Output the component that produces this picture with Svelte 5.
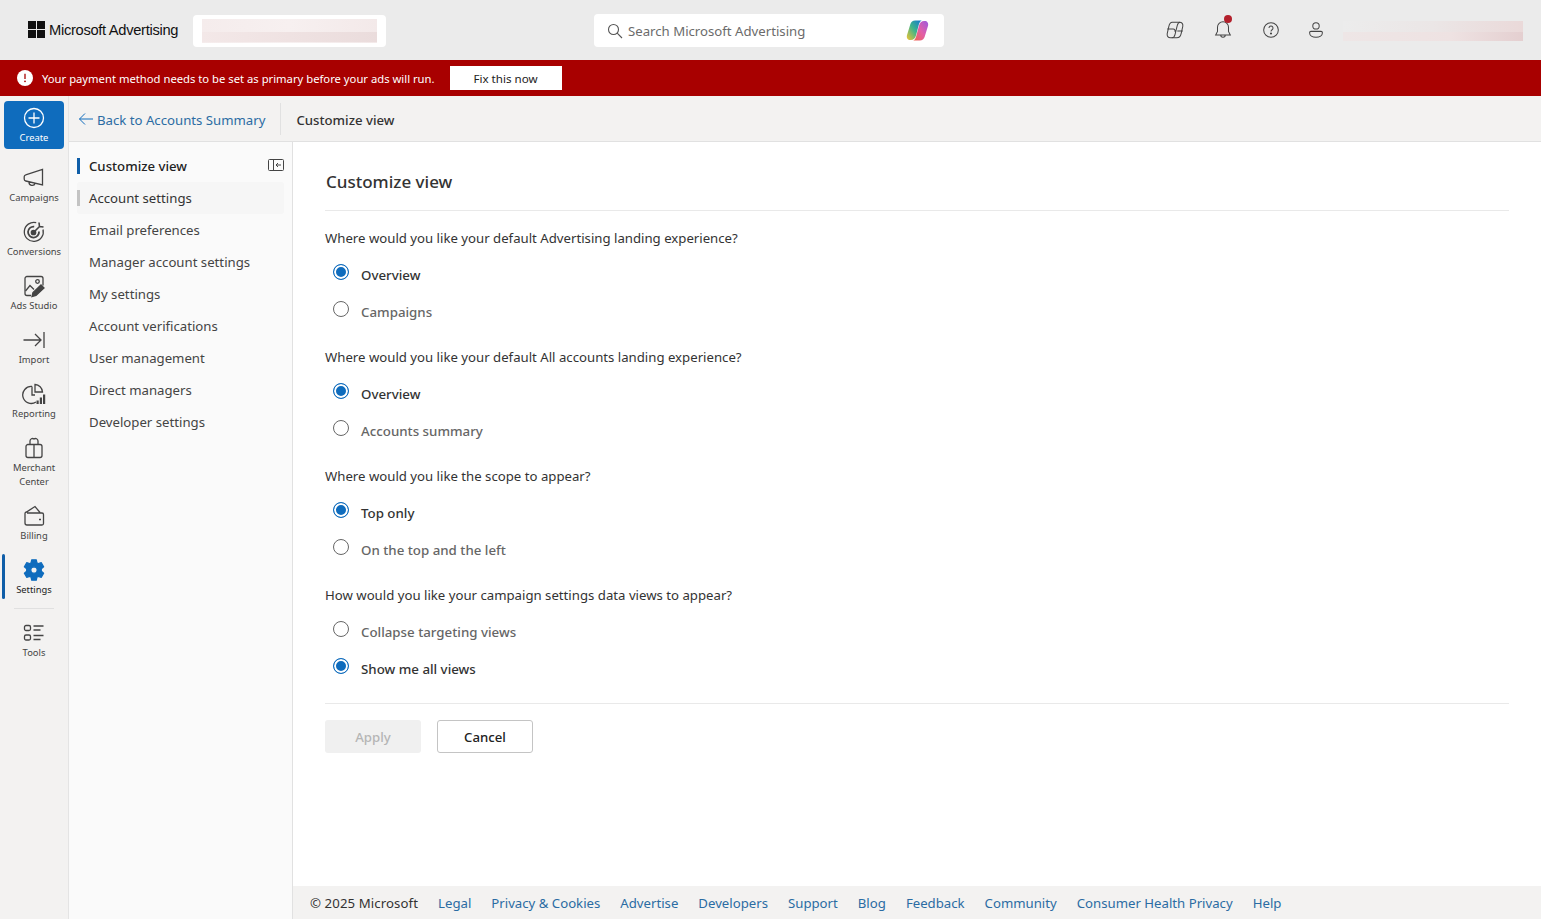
<script>
	const railItems = [
		{ label: 'Campaigns', icon: 'campaigns' },
		{ label: 'Conversions', icon: 'conversions' },
		{ label: 'Ads Studio', icon: 'ads' },
		{ label: 'Import', icon: 'import' },
		{ label: 'Reporting', icon: 'reporting' },
		{ label: 'Merchant Center', icon: 'merchant' },
		{ label: 'Billing', icon: 'billing' },
		{ label: 'Settings', icon: 'settings', active: true }
	];

	const icons = {
		campaigns: 'M20.5 3.500v15.500L3.800 15a2 2 0 0 1-1.600-2v-2.300a2 2 0 0 1 1.500-1.900zM7 16a3.200 3.200 0 0 0 6.200 1.300',
		import: 'M1.500 12h17.500M13 6l6 6-6 6M22 4v16',
		merchant: 'M6 8.500h12a2 2 0 0 1 2 2v9a2 2 0 0 1-2 2H6a2 2 0 0 1-2-2v-9a2 2 0 0 1 2-2zM12 8.500v13M8 8.500V5a2.500 2.500 0 0 1 4-2 2.500 2.500 0 0 1 4 2v3.500',
		billing: 'M5 9h15a1.500 1.500 0 0 1 1.500 1.500v9A1.500 1.500 0 0 1 20 21H5a2 2 0 0 1-2-2V9.500M3 9.500A1.500 1.500 0 0 1 4.500 8L13 2.500 18 8.500M17 15.500h2'
	};

	const subnav = [
		'Customize view',
		'Account settings',
		'Email preferences',
		'Manager account settings',
		'My settings',
		'Account verifications',
		'User management',
		'Direct managers',
		'Developer settings'
	];

	const questions = [
		{
			title: 'Where would you like your default Advertising landing experience?',
			options: ['Overview', 'Campaigns'],
			value: 'Overview'
		},
		{
			title: 'Where would you like your default All accounts landing experience?',
			options: ['Overview', 'Accounts summary'],
			value: 'Overview'
		},
		{
			title: 'Where would you like the scope to appear?',
			options: ['Top only', 'On the top and the left'],
			value: 'Top only'
		},
		{
			title: 'How would you like your campaign settings data views to appear?',
			options: ['Collapse targeting views', 'Show me all views'],
			value: 'Show me all views'
		}
	];

	const footerLinks = [
		'Legal',
		'Privacy & Cookies',
		'Advertise',
		'Developers',
		'Support',
		'Blog',
		'Feedback',
		'Community',
		'Consumer Health Privacy',
		'Help'
	];
</script>

<div class="page">
	<header class="topbar">
		<div class="brand">
			<svg class="ms-logo" viewBox="0 0 17 17" width="17" height="17">
				<rect width="8" height="8" fill="#111" />
				<rect x="9" width="8" height="8" fill="#111" />
				<rect y="9" width="8" height="8" fill="#111" />
				<rect x="9" y="9" width="8" height="8" fill="#111" />
			</svg>
			<span>Microsoft Advertising</span>
		</div>
		<div class="account-box"><div class="smudge"></div></div>

		<div class="search">
			<svg viewBox="0 0 16 16" width="16" height="16" fill="none" stroke="#555" stroke-width="1.100">
				<circle cx="6.500" cy="6.500" r="5" />
				<path d="M10.200 10.200 15 15" />
			</svg>
			<span class="placeholder">Search Microsoft Advertising</span>
			<svg class="copilot" viewBox="0 0 24 24" width="23" height="23">
				<defs>
					<linearGradient id="cpA" x1="0" y1="1" x2="1" y2="0">
						<stop offset="0" stop-color="#f4c430" />
						<stop offset="0.5" stop-color="#3fb58a" />
						<stop offset="1" stop-color="#1273d6" />
					</linearGradient>
					<linearGradient id="cpB" x1="0" y1="1" x2="1" y2="0">
						<stop offset="0" stop-color="#9a5be0" />
						<stop offset="0.5" stop-color="#e25fa8" />
						<stop offset="1" stop-color="#f0654a" />
					</linearGradient>
				</defs>
				<path d="M9.500 1.500h7c-1.500.6-2.400 2-3 4L10.500 17c-.7 3-2.700 5-5.500 5H4.500C1.800 22 .3 19.800 1 17L4.500 5.500C5.200 3 7 1.500 9.500 1.500z" fill="url(#cpA)" />
				<path d="M9.500 1.500h7c-1.500.6-2.400 2-3 4L10.500 17c-.7 3-2.700 5-5.500 5H4.500C1.800 22 .3 19.800 1 17L4.500 5.500C5.200 3 7 1.500 9.500 1.500z" fill="url(#cpB)" transform="rotate(180 12 12)" />
			</svg>
		</div>

		<div class="top-icons">
			<svg viewBox="0 0 24 24" width="22" height="22" fill="none" stroke="#444" stroke-width="1.100">
				<path d="M9 3.500h8c2.500 0 4 2 3.500 4.500l-1.800 8c-.6 2.800-2.300 4.500-4.700 4.500H7c-2.500 0-4-2-3.500-4.500l1.800-8C5.900 5.200 7 3.500 9 3.500z" />
				<path d="M8.500 20.500c2 0 3-1.400 3.500-3.500l2.500-10c.5-2 1.500-3.500 3-3.500M3.500 11h6.500c1.800 0 2.300 1.500 2 3M20.500 13H14.500" />
			</svg>
			<span class="bell">
				<svg viewBox="0 0 24 24" width="22" height="22" fill="none" stroke="#444" stroke-width="1.100">
					<path d="M12 3a6 6 0 0 0-6 6v4.500L4 17.500h16l-2-4V9a6 6 0 0 0-6-6zM9.500 17.500a2.500 2.500 0 0 0 5 0" />
				</svg>
				<i class="dot"></i>
			</span>
			<svg viewBox="0 0 24 24" width="22" height="22" fill="none" stroke="#444" stroke-width="1.100">
				<circle cx="12" cy="12" r="8" />
				<path d="M9.800 9.800a2.200 2.200 0 1 1 3.400 1.900c-.8.500-1.200 1-1.200 1.800" />
				<circle cx="12" cy="15.800" r=".6" fill="#444" />
			</svg>
			<svg class="person" viewBox="0 0 24 24" width="22" height="22" fill="none" stroke="#444" stroke-width="1.100">
				<circle cx="12" cy="7.500" r="3.500" />
				<path d="M6.500 13.500h11A1.500 1.500 0 0 1 19 15c0 3-3 5-7 5s-7-2-7-5a1.500 1.500 0 0 1 1.500-1.500z" />
			</svg>
		</div>
		<div class="user-smudge"></div>
	</header>

	<div class="banner">
		<svg viewBox="0 0 16 16" width="16" height="16">
			<circle cx="8" cy="8" r="8" fill="#fff" />
			<path d="M8 3.800v5.200" stroke="#a80000" stroke-width="1.300" />
			<circle cx="8" cy="11.300" r=".9" fill="#a80000" />
		</svg>
		<span class="banner-text">Your payment method needs to be set as primary before your ads will run.</span>
		<button class="fix">Fix this now</button>
	</div>

	<div class="body">
		<nav class="rail">
			<button class="create">
				<svg viewBox="0 0 22 22" width="22" height="22" fill="none" stroke="#fff" stroke-width="1.300">
					<circle cx="11" cy="11" r="9.500" />
					<path d="M11 5.500v11M5.500 11h11" />
				</svg>
				<span>Create</span>
			</button>

			{#each railItems as item}
				<div class="rail-item" class:active={item.active}>
					<svg class="rail-icon" viewBox="0 0 24 24" width="24" height="24" fill="none" stroke="#444" stroke-width="1.300">
						{#if item.icon === 'conversions'}
							<path d="M21 9.500a9.500 9.500 0 1 1-6.800-6.800" />
							<path d="M17 11.500a5.500 5.500 0 1 1-4.800-4.900" stroke-width="1.800" />
							<circle cx="11.500" cy="12.500" r="2.200" fill="#444" />
							<path d="M12 12l6-6M17 2.500l.5 4L21.500 7" stroke-width="1.600" />
						{:else if item.icon === 'ads'}
							<path d="M9 21.500H5a2 2 0 0 1-2-2V4.500a2 2 0 0 1 2-2h14a2 2 0 0 1 2 2v7" />
							<circle cx="15.500" cy="7.500" r="1.800" />
							<path d="M3.500 17l4.500-5.500 4 4" />
							<path d="M10 22.500l1-4 8-7.500 3 3-8 7.500z" fill="#444" />
						{:else if item.icon === 'reporting'}
							<path d="M10 4.500a8.500 8.500 0 1 0 4 15.500M10 4.500V13h3" />
							<path d="M13 2.500a8 8 0 0 1 7.500 7.500H13z" />
							<rect x="14.500" y="18.500" width="2.200" height="3.500" fill="#444" stroke="none" />
							<rect x="17.800" y="15.500" width="2.200" height="6.500" fill="#444" stroke="none" />
							<rect x="21" y="12.500" width="2.200" height="9.500" fill="#444" stroke="none" />
						{:else if item.icon === 'settings'}
							<path
								d="M9.700 1.800h4.600l.6 3 1.500.9 2.900-1 2.300 4-2.300 2v2.600l2.300 2-2.300 4-2.900-1-1.500.9-.6 3H9.700l-.6-3-1.500-.9-2.900 1-2.300-4 2.300-2v-2.600l-2.300-2 2.300-4 2.900 1 1.500-.9zM12 8.800a3.200 3.200 0 1 0 0 6.400 3.200 3.200 0 0 0 0-6.400z"
								fill="#0f6cbd"
								fill-rule="evenodd"
								stroke="#0f6cbd"
								stroke-linejoin="round"
							/>
						{:else}
							<path d={icons[item.icon]} />
						{/if}
					</svg>
					<span>{item.label}</span>
				</div>
			{/each}

			<div class="rail-divider"></div>

			<div class="rail-item tools">
				<svg class="rail-icon" viewBox="0 0 24 24" width="24" height="24" fill="none" stroke="#444" stroke-width="1.300">
					<rect x="2.500" y="4.500" width="6" height="5" rx="1.500" />
					<rect x="2.500" y="14" width="6" height="5" rx="1.500" />
					<path d="M11.500 5h10M11.500 9h7M11.500 14.500h10M11.500 18.500h7" />
				</svg>
				<span>Tools</span>
			</div>
		</nav>

		<div class="main">
			<div class="crumbs">
				<a class="back" href="#back">
					<svg viewBox="0 0 16 16" width="16" height="16" fill="none" stroke="#0f6cbd" stroke-width="1">
						<path d="M15 8H1.500M7 2.500 1.500 8 7 13.500" />
					</svg>
					Back to Accounts Summary
				</a>
				<span class="crumb-sep"></span>
				<span class="crumb-current">Customize view</span>
			</div>

			<div class="columns">
				<aside class="subnav">
					{#each subnav as label, i}
						<div class="subnav-item" class:current={i === 0} class:hover={i === 1}>{label}</div>
					{/each}
					<svg class="collapse" viewBox="0 0 16 12" width="16" height="12" fill="none" stroke="#444" stroke-width="1">
						<rect x=".5" y=".5" width="15" height="11" rx="1" />
						<path d="M5.500 .5v11M13 6H8M10 4 8 6l2 2" />
					</svg>
				</aside>

				<div class="right">
					<main class="content">
						<h1>Customize view</h1>
						<div class="rule"></div>

						{#each questions as q}
							<fieldset>
								<p class="question">{q.title}</p>
								{#each q.options as option}
									<div class="option" class:selected={q.value === option}>
										<span class="radio"></span>
										<span>{option}</span>
									</div>
								{/each}
							</fieldset>
						{/each}

						<div class="rule actions-rule"></div>
						<div class="actions">
							<button class="apply" disabled>Apply</button>
							<button class="cancel">Cancel</button>
						</div>
					</main>

					<footer>
						<span class="copyright">© 2025 Microsoft</span>
						{#each footerLinks as link}
							<a href="#footer">{link}</a>
						{/each}
					</footer>
				</div>
			</div>
		</div>
	</div>
</div>

<style>
	:global(body) {
		margin: 0;
		background: #fff;
	}

	.page {
		height: 919px;
		display: flex;
		flex-direction: column;
		overflow: hidden;
		font-family: 'Noto Sans', 'Open Sans', sans-serif;
		font-size: 13.200px;
		color: #323130;
	}

	.topbar {
		height: 60px;
		flex: none;
		display: flex;
		align-items: center;
		background: #ebebeb;
		position: relative;
	}

	.brand {
		display: flex;
		align-items: center;
		gap: 4px;
		margin-left: 28px;
		width: 165px;
		font-family: 'Liberation Sans', sans-serif;
		font-size: 14.700px;
		letter-spacing: -0.300px;
		color: #111;
		white-space: nowrap;
		margin-top: -1px;
	}

	.account-box {
		width: 175px;
		height: 24px;
		padding: 4px 9px;
		background: #fff;
		border-radius: 4px;
		margin-top: 1px;
	}

	.smudge {
		height: 100%;
		background:
			linear-gradient(90deg, #f3e8e8, #efe2e2 50%, #eadcdc) bottom / 100% 42% no-repeat,
			linear-gradient(90deg, #f5ecec, #f7f0f0 50%, #f3e9e9);
	}

	.search {
		position: absolute;
		left: 594px;
		top: 14px;
		width: 350px;
		height: 33px;
		box-sizing: border-box;
		padding: 0 13px;
		background: #fff;
		border-radius: 4px;
		display: flex;
		align-items: center;
		gap: 5px;
	}

	.placeholder {
		color: #6b6b6b;
	}

	.copilot {
		margin-left: auto;
		margin-right: 2px;
		margin-top: -1px;
	}

	.top-icons {
		position: absolute;
		left: 1164px;
		top: 19px;
		display: flex;
		gap: 26px;
	}

	.top-icons svg {
		display: block;
	}

	.top-icons .person {
		margin-left: -3px;
	}

	.bell {
		position: relative;
	}

	.dot {
		position: absolute;
		right: 2px;
		top: -4px;
		width: 8px;
		height: 8px;
		border-radius: 50%;
		background: #b3202c;
	}

	.user-smudge {
		position: absolute;
		left: 1343px;
		top: 21px;
		width: 180px;
		height: 20px;
		background:
			linear-gradient(90deg, #eee6e6, #eee2e2 60%, #e4cfd0) bottom / 100% 45% no-repeat,
			linear-gradient(90deg, #ececec, #ebe6e6 50%, #ead9d9);
	}

	.banner {
		height: 36px;
		flex: none;
		display: flex;
		align-items: center;
		background: #a80000;
		color: #fff;
		padding-left: 17px;
	}

	.banner-text {
		margin-left: 9px;
		font-size: 11.250px;
	}

	.fix {
		margin-left: 15px;
		width: 112px;
		height: 24px;
		padding: 0;
		border: 0;
		background: #fff;
		color: #222;
		font: inherit;
		font-size: 11.600px;
	}

	.body {
		flex: 1;
		min-height: 0;
		display: flex;
	}

	.rail {
		flex: none;
		box-sizing: border-box;
		padding-top: 5px;
		background: #f3f2f1;
		border-right: 1px solid #e4e4e4;
		width: 69px;
	}

	.create {
		display: flex;
		flex-direction: column;
		align-items: center;
		width: 60px;
		height: 48px;
		margin: 0 0 2px 4px;
		padding: 6px 0 0;
		border: 0;
		border-radius: 4px;
		background: #0f6cbd;
		color: #fff;
		font: inherit;
		font-size: 9.400px;
		line-height: 14px;
	}

	.create svg {
		margin-bottom: 2px;
	}

	.rail-item {
		position: relative;
		display: flex;
		flex-direction: column;
		align-items: center;
		padding: 15px 4px 0;
		font-size: 9.400px;
		line-height: 14px;
		text-align: center;
		color: #444;
	}

	.rail-item span {
		margin-top: 1px;
	}

	.rail-item.active::before {
		content: '';
		position: absolute;
		left: 2px;
		top: 11px;
		width: 3px;
		height: 45px;
		border-radius: 2px;
		background: #0f5ea8;
	}

	.rail-item.active span {
		color: #222;
	}

	.rail-item.tools {
		padding-top: 12px;
	}

	.rail-icon {
		display: block;
	}

	.rail-divider {
		height: 1px;
		margin: 11px 14px 0;
		background: #e0e0e0;
	}

	.main {
		flex: 1;
		min-width: 0;
		display: flex;
		flex-direction: column;
	}

	.crumbs {
		height: 45px;
		flex: none;
		display: flex;
		align-items: center;
		background: #f3f2f1;
		border-bottom: 1px solid #e1e1e1;
		box-sizing: content-box;
	}

	.back {
		display: flex;
		align-items: center;
		gap: 3px;
		margin-left: 9px;
		color: #2b6ca3;
		text-decoration: none;
		white-space: nowrap;
		padding-top: 2px;
	}

	.back svg {
		margin-top: -2px;
	}

	.crumb-sep {
		width: 1px;
		height: 32px;
		margin: 0 15px;
		background: #e1e1e1;
	}

	.crumb-current {
		font-weight: 500;
		color: #333;
		padding-top: 2px;
	}

	.columns {
		flex: 1;
		min-height: 0;
		display: flex;
	}

	.subnav {
		position: relative;
		width: 224px;
		flex: none;
		box-sizing: border-box;
		padding: 8px 8px 0;
		background: #fafafa;
		border-right: 1px solid #e1e1e1;
	}

	.subnav-item {
		position: relative;
		height: 32px;
		box-sizing: border-box;
		padding: 0 12px;
		display: flex;
		align-items: center;
		color: #444;
	}

	.subnav-item.current {
		font-weight: 500;
		color: #222;
	}

	.subnav-item.current::before,
	.subnav-item.hover::before {
		content: '';
		position: absolute;
		left: 0;
		top: 8px;
		width: 3px;
		height: 16px;
		background: #0f5ea8;
	}

	.subnav-item.hover {
		background: #f6f6f6;
		border-radius: 3px;
		color: #333;
	}

	.subnav-item.hover::before {
		background: #c4c4c4;
	}

	.collapse {
		position: absolute;
		left: 199px;
		top: 17px;
	}

	.right {
		flex: 1;
		min-width: 0;
		display: flex;
		flex-direction: column;
	}

	.content {
		flex: 1;
		min-height: 0;
		padding: 0 32px;
		background: #fff;
	}

	h1 {
		margin: 0 0 0 1px;
		height: 68px;
		line-height: 80px;
		font-size: 17px;
		font-weight: 500;
		color: #333;
	}

	.rule {
		height: 1px;
		background: #e9e9e9;
	}

	fieldset {
		margin: 0;
		padding: 0;
		border: 0;
		height: 119px;
	}

	.question {
		margin: 0;
		height: 45px;
		line-height: 54px;
		color: #333;
	}

	.option {
		display: flex;
		align-items: center;
		height: 37px;
		padding-left: 8px;
		font-weight: 500;
		font-size: 13.300px;
		color: #666;
	}

	.option.selected {
		color: #333;
	}

	.radio {
		box-sizing: border-box;
		width: 16px;
		height: 16px;
		margin: -6px 12px 0 0;
		border: 1px solid #666;
		border-radius: 50%;
		background: #fff;
	}

	.option.selected .radio {
		border-color: #0f6cbd;
		background: #0f6cbd;
		box-shadow: inset 0 0 0 2px #fff;
	}

	.actions-rule {
		margin-top: 16px;
	}

	.actions {
		display: flex;
		gap: 16px;
		margin-top: 16px;
	}

	.actions button {
		width: 96px;
		height: 33px;
		padding: 0;
		border-radius: 3px;
		font: inherit;
		font-weight: 500;
	}

	.apply {
		border: 0;
		background: #f0f0f0;
		color: #b5b5b5;
	}

	.cancel {
		border: 1px solid #c4c4c4;
		background: #fff;
		color: #222;
	}

	footer {
		height: 33px;
		flex: none;
		display: flex;
		align-items: center;
		gap: 20px;
		padding-left: 17px;
		background: #f3f2f1;
	}

	footer a {
		color: #2b6ca3;
		text-decoration: none;
		white-space: nowrap;
	}

	.copyright {
		color: #333;
		letter-spacing: 0.100px;
	}
</style>
